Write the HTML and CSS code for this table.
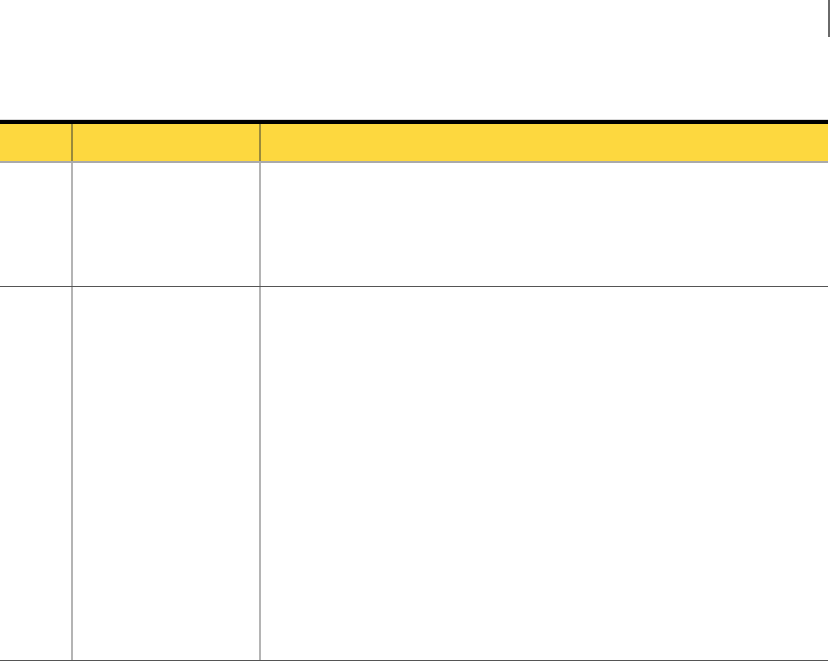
FILE: index.html
```html
<!DOCTYPE html>
<html>
<head>
<meta charset="utf-8">
<link rel="stylesheet" href="styles.css">
</head>
<body>
<div class="page">
  <div class="topbar"></div>
  <div class="table">
    <div class="row head">
      <div class="cell c1"></div>
      <div class="cell c2"></div>
      <div class="cell c3"></div>
    </div>
    <div class="row r1">
      <div class="cell c1"></div>
      <div class="cell c2"></div>
      <div class="cell c3"></div>
    </div>
    <div class="row r2">
      <div class="cell c1"></div>
      <div class="cell c2"></div>
      <div class="cell c3"></div>
    </div>
  </div>
</div>
</body>
</html>
```
FILE: styles.css
```css
html, body {
  margin: 0;
  padding: 0;
  background: #ffffff;
  font-family: "Liberation Sans", Arial, sans-serif;
}
.page {
  width: 831px;
  height: 661px;
  overflow: hidden;
}
.topbar {
  width: 828px;
  height: 37px;
  border-right: 2px solid #6a6a6a;
}
.table {
  margin-top: 82px;
  width: 828px;
  border-top: 1px solid #d8d8d8;
}
.row {
  display: grid;
  grid-template-columns: 71px 188px 569px;
  box-sizing: border-box;
}
.cell {
  box-sizing: border-box;
}
.c2, .c3 {
  border-left: 2px solid #b4b4b4;
}
.head {
  background: #fdd83f;
  border-top: 4px solid #000000;
  height: 43px;
  border-bottom: 2px solid #aaaaaa;
}
.head .c2, .head .c3 {
  border-left-color: #9a8a3a;
}
.r1 {
  height: 124px;
  border-bottom: 1px solid #555555;
}
.r2 {
  height: 374px;
  border-bottom: 1px solid #555555;
}
```
